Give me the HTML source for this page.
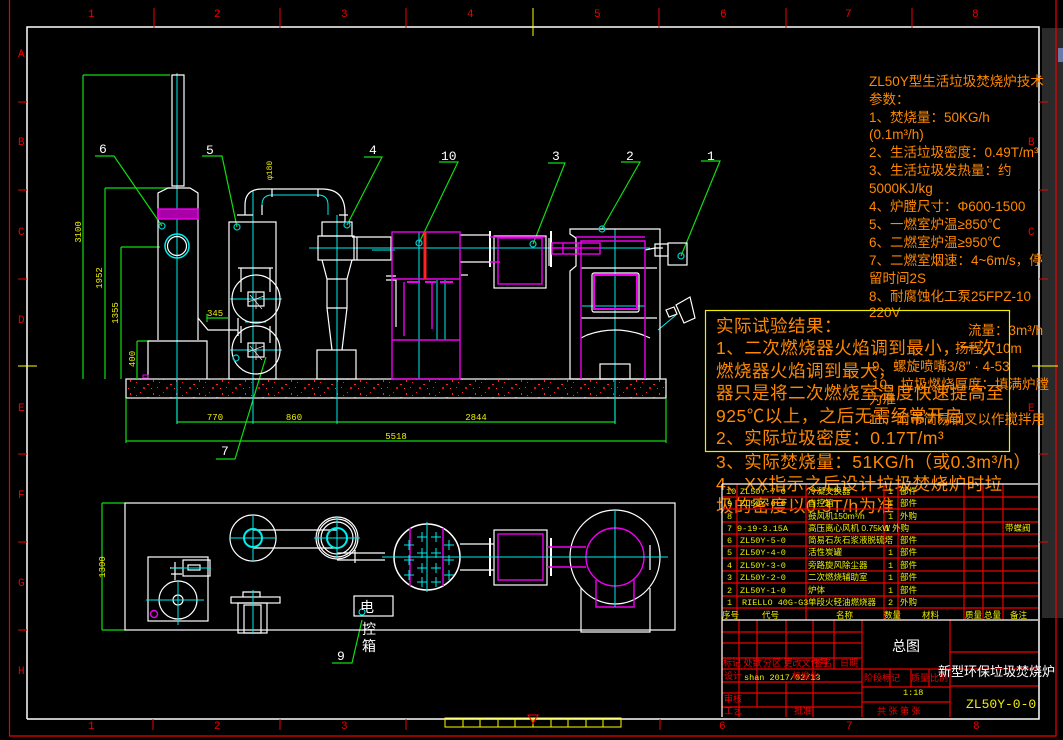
<!DOCTYPE html>
<html><head><meta charset="utf-8"><style>
html,body{margin:0;padding:0;background:#000;width:1063px;height:740px;overflow:hidden}
svg{display:block}
text{font-family:"Liberation Mono","Noto Sans CJK SC",monospace}
.cj{font-family:"Liberation Sans","Noto Sans CJK SC",sans-serif}
</style></head><body>
<svg width="1063" height="740" viewBox="0 0 1063 740" xmlns="http://www.w3.org/2000/svg">
<defs>
<pattern id="sp" width="23" height="13" patternUnits="userSpaceOnUse">
<rect x="2" y="2" width="1" height="1" fill="#f22"/><rect x="9" y="7" width="2" height="1" fill="#f22"/><rect x="15" y="3" width="1" height="2" fill="#f22"/><rect x="19" y="10" width="1" height="1" fill="#f22"/><rect x="5" y="10" width="2" height="2" fill="#d11"/><rect x="13" y="11" width="1" height="1" fill="#f33"/><rect x="21" y="5" width="1" height="1" fill="#f22"/>
</pattern>
</defs>
<rect width="1063" height="740" fill="#000"/>
<!-- grey strip -->
<rect x="1042" y="28" width="21" height="590" fill="#2a2a2a"/>
<rect x="1058" y="48" width="5" height="14" fill="#6a7aa8"/>
<!-- frame -->
<g fill="none">
<path d="M9.5 0V736H1056V0" stroke="#e00" stroke-width="1.2"/>
<path d="M27 719V27H1039V719H27" stroke="#fff" stroke-width="1.5"/>
</g>
<g stroke="#e00" stroke-width="1">
<path d="M154 8V28M280 8V28M406 8V28M659 8V28M786 8V28M912 8V28"/>
<path d="M18 102H27M18 190H27M18 279H27M18 454H27M18 542H27M18 630H27"/>
<path d="M1039 102H1048M1039 190H1048M1039 279H1048M1039 454H1048M1039 542H1048"/>
<path d="M153 719V730M280 719V730M406 719V730M660 719V730"/>
</g>
<path d="M533 8V36" stroke="#ff0"/><path d="M18 366H37" stroke="#ff0"/><path d="M1032 366H1058" stroke="#ff0"/>
<g fill="#e00" font-size="11">
<text x="88" y="17">1</text><text x="214" y="17">2</text><text x="341" y="17">3</text><text x="467" y="17">4</text><text x="594" y="17">5</text><text x="720" y="17">6</text><text x="845" y="17">7</text><text x="972" y="17">8</text>
<text x="18" y="57">A</text><text x="18" y="145">B</text><text x="18" y="235">C</text><text x="18" y="323">D</text><text x="18" y="411">E</text><text x="18" y="498">F</text><text x="18" y="586">G</text><text x="18" y="674">H</text>
<text x="1028" y="145">B</text><text x="1028" y="235">C</text><text x="1028" y="411">E</text>
<text x="88" y="729">1</text><text x="214" y="729">2</text><text x="341" y="729">3</text><text x="719" y="729">6</text><text x="846" y="729">7</text><text x="973" y="729">8</text>
</g>
<!-- ruler -->
<g fill="none" stroke="#ff0"><rect x="445" y="718" width="176" height="9"/>
<path d="M463 718v9M480 718v9M498 718v9M515 718v9M533 718v9M551 718v9M568 718v9M586 718v9M603 718v9"/></g>
<path d="M528 715h10l-5 8z" fill="none" stroke="#f00"/>

<!-- ===== ELEVATION ===== -->
<!-- slab -->
<rect x="126" y="379" width="540" height="19" fill="url(#sp)" stroke="#fff" stroke-width="1.2"/>
<!-- dimensions green -->
<g stroke="#1d1" stroke-width="1.2" fill="none">
<path d="M83 75V379M83 75H170M105 188V379M105 188H170M121 247V379M121 247H160M137 341V379M137 341H150"/>
<path d="M177 422H615M126 441H666M126 398V443M666 398V443M615 398V424M177 398V424"/>
<path d="M207 318H228M207 314V322"/>
<path d="M95 156H114L162 226M202 156H222L237 227M364 157H382L347 225M439 162H458L419 243M548 163H565L533 244M621 162H640L602 229M701 161H720L681 256M216 459H235L266 357"/>
<path d="M102 503V630M102 503H125M102 630H125M332 663H352L362 620"/>
</g>
<g fill="#ee0" font-size="9">
<text transform="translate(81,232) rotate(-90)" text-anchor="middle">3100</text>
<text transform="translate(102,278) rotate(-90)" text-anchor="middle">1952</text>
<text transform="translate(118,313) rotate(-90)" text-anchor="middle">1355</text>
<text transform="translate(135,359) rotate(-90)" text-anchor="middle">400</text>
<text transform="translate(105,567) rotate(-90)" text-anchor="middle">1300</text>
<text x="207" y="316">345</text>
<text x="215" y="420" text-anchor="middle">770</text><text x="294" y="420" text-anchor="middle">860</text><text x="476" y="420" text-anchor="middle">2844</text><text x="396" y="439" text-anchor="middle">5518</text>
<text transform="translate(272,180) rotate(-90)" font-size="8">φ180</text>
</g>
<g fill="#fff" font-size="13">
<text x="99" y="153">6</text><text x="206" y="154">5</text><text x="369" y="154">4</text><text x="441" y="160">10</text><text x="552" y="160">3</text><text x="626" y="160">2</text><text x="707" y="160">1</text><text x="221" y="455">7</text><text x="337" y="660">9</text>
</g>
<!-- cyan centerlines -->
<g stroke="#0ee" stroke-width="1" fill="none">
<path d="M177 73V424M253 190V424M337 215V424M615 229V424M309 248H650"/>
<circle cx="177" cy="246" r="12" stroke-width="1.5"/>
<path d="M230 299H282M230 350H282M245 322H266"/>
<path d="M262 215V205Q262 195 272 195H318Q328 195 328 205V215"/>
<path d="M419 232V379M437 280V340M445 280V340M372 250H395"/>
<path d="M582 306H645M658 330L676 315"/>
</g>
<!-- white equipment -->
<g stroke="#fff" stroke-width="1.2" fill="none">
<path d="M172 75V186H184V75Z"/>
<path d="M158 340V193L168 188H190L198 193V340"/>
<path d="M148 379V341H207V379"/>
<circle cx="177" cy="246" r="9.5"/>
<rect x="229" y="222" width="47" height="157"/>
<circle cx="256" cy="299" r="24"/><circle cx="256" cy="350" r="24"/>
<path d="M241 292V268M270 292V268M238 268H273M241 343V326M270 343V326"/>
<rect x="248" y="292" width="16" height="14"/><rect x="248" y="343" width="16" height="14"/>
<path d="M198 318L208 330H238V318M238 318V336"/>
<path d="M245 215V205Q245 189 262 189H322Q345 189 345 213V222M237 215H253M339 215H348"/>
<path d="M262 205V215M272 189V197M318 189V197"/>
<rect x="322" y="222" width="30" height="14"/><rect x="318" y="236" width="36" height="24"/>
<path d="M322 260L327 279H347L352 260M327 279V308H347V279M327 308L332 350M347 308L342 350"/>
<rect x="317" y="350" width="39" height="29"/>
<path d="M352 237H391V260H352M357 237V260"/>
<path d="M460 235H490V262H460"/>
<path d="M490 231V267M551 231V267" stroke-width="2"/>
<rect x="494" y="236" width="52" height="52"/>
<path d="M549 238V266"/>
<path d="M570 379V271L576 266V238L570 234V229H660V379Z"/>
<path d="M581 268H657M581 318H657M581 338L587 335Q615 325 643 335L650 338"/>
<rect x="592" y="273" width="47" height="39" rx="2"/>
<rect x="600" y="364" width="30" height="15"/>
<path d="M645 250L655 248H663M655 244V256H668V244Z"/>
<rect x="668" y="243" width="19" height="22"/>
<path d="M676 305L690 297L695 318L684 323Z"/>
<path d="M666 310l8 -3l3 7l-8 3z"/>
<path d="M386 280H396V327M386 276H396"/>
<path d="M461 275H468"/>
</g>
<g stroke="#ddd" stroke-width="0.8" fill="none">
<path d="M248 302l16 -6M250 295l12 14M256 293v16M248 352l16 -6M250 346l12 14M256 344v16"/>
</g>
<!-- magenta -->
<g stroke="#e0e" stroke-width="1.4" fill="none">
<rect x="158" y="209" width="40" height="10" fill="#a0a" />
<rect x="392" y="232" width="68" height="147"/>
<path d="M392 279H460M392 340H460M404 282V336M432 283V329"/>
<rect x="498" y="238" width="44" height="46"/>
<path d="M490 237H545M490 262H500"/>
<rect x="552" y="243" width="48" height="11"/><path d="M552 248H600M563 243V254M578 243V254"/>
<path d="M581 379V241H645V379M576 237H645"/>
<rect x="594" y="275" width="43" height="34" stroke-width="2"/>
<path d="M407 282H420M425 282H436M440 282H453" stroke-width="2"/>
</g>
<path d="M425 232V279" stroke="#f22" stroke-width="3"/>
<g stroke="#0cc" stroke-width="1.2" fill="none">
<circle cx="162" cy="226" r="3"/><circle cx="237" cy="227" r="3"/><circle cx="347" cy="225" r="3"/><circle cx="419" cy="243" r="3"/><circle cx="533" cy="244" r="3"/><circle cx="602" cy="229" r="3"/><circle cx="681" cy="256" r="3"/><circle cx="236" cy="358" r="3"/>
</g>
<rect x="143" y="375" width="5" height="3" fill="none" stroke="#e0e"/>

<!-- ===== PLAN ===== -->
<g stroke="#fff" stroke-width="1.2" fill="none">
<rect x="125" y="503" width="550" height="127"/>
<rect x="148" y="557" width="60" height="64"/>
<circle cx="178" cy="600" r="19"/><circle cx="178" cy="600" r="5"/>
<rect x="183" y="560" width="27" height="16"/><rect x="188" y="565" width="12" height="5"/>
<path d="M170 568H182M171 574H182M175 562V580"/>
<ellipse cx="253" cy="538" rx="23" ry="23"/>
<ellipse cx="337" cy="538" rx="19" ry="19"/><ellipse cx="337" cy="538" rx="16" ry="16"/><ellipse cx="337" cy="538" rx="21" ry="21"/>
<path d="M253 530H337M253 548H337M337 553H385M337 560H385M355 550V563"/>
<circle cx="427" cy="557" r="33" stroke-width="1.5"/>
<path d="M460 544H494M460 570H494M650 545V570"/>
<path d="M490 538V576M551 538V576" stroke-width="2"/>
<rect x="494" y="530" width="53" height="55"/>
<ellipse cx="615" cy="557" rx="45" ry="47"/>
<path d="M581 588V632H650V588"/>
<rect x="231" y="597" width="49" height="6"/>
<path d="M243 597V592H260V597"/>
<rect x="238" y="603" width="29" height="30"/><rect x="244" y="605" width="17" height="28"/>
<rect x="354" y="596" width="39" height="20"/>
</g>
<g stroke="#e0e" stroke-width="1.4" fill="none">
<rect x="498" y="534" width="45" height="46"/>
<ellipse cx="615" cy="557" rx="29" ry="29"/>
<path d="M596 580V607H634V580M547 547H586M547 567H586"/>
<path d="M410 528V586M443 528V586"/>
<circle cx="154" cy="614" r="3.5" stroke="#e0e"/>
</g>
<g stroke="#0ee" stroke-width="1" fill="none">
<path d="M146 600H204M178 581V625M230 538H276M253 515V561M314 538H360M337 518V558M382 557H668M427 522V592M615 510V607M171 568H211M253 590V633"/>
<circle cx="253" cy="538" r="9" stroke-width="2"/><circle cx="337" cy="538" r="10" stroke-width="2"/>
<path d="M404 545h10m-5 -5v10M404 560h10m-5 -5v10M404 575h10m-5 -5v10M417 537h10m-5 -5v10M417 553h10m-5 -5v10M417 568h10m-5 -5v10M417 582h10m-5 -5v10M431 537h10m-5 -5v10M431 553h10m-5 -5v10M431 568h10m-5 -5v10M431 582h10m-5 -5v10M444 545h10m-5 -5v10M444 560h10m-5 -5v10M444 575h10m-5 -5v10"/>
<circle cx="362" cy="612" r="3"/>
</g>
<g fill="#fff" font-size="14" class="cj"><text x="360" y="612" class="cj">电</text><text x="362" y="634" class="cj">控</text><text x="362" y="651" class="cj">箱</text></g>

<!-- ===== orange notes ===== -->
<g fill="#f80" font-size="13.5" class="cj">
<text x="869" y="86" class="cj">ZL50Y型生活垃圾焚烧炉技术</text>
<text x="869" y="104" class="cj">参数：</text>
<text x="869" y="122" class="cj">1、焚烧量：50KG/h</text>
<text x="869" y="139" class="cj">(0.1m³/h)</text>
<text x="869" y="157" class="cj">2、生活垃圾密度：0.49T/m³</text>
<text x="869" y="175" class="cj">3、生活垃圾发热量：约</text>
<text x="869" y="193" class="cj">5000KJ/kg</text>
<text x="869" y="211" class="cj">4、炉膛尺寸：Φ600-1500</text>
<text x="869" y="229" class="cj">5、一燃室炉温≥850℃</text>
<text x="869" y="247" class="cj">6、二燃室炉温≥950℃</text>
<text x="869" y="265" class="cj">7、二燃室烟速：4~6m/s，停</text>
<text x="869" y="283" class="cj">留时间2S</text>
<text x="869" y="301" class="cj">8、耐腐蚀化工泵25FPZ-10</text>
<text x="869" y="317" class="cj">220V</text>
<text x="968" y="335" class="cj">流量：3m³/h</text>
<text x="955" y="353" class="cj">扬程：10m</text>
<text x="872" y="371" class="cj">9、螺旋喷嘴3/8"  ·  4-53</text>
<text x="872" y="389" class="cj">10、垃圾燃烧厚度：填满炉膛</text>
<text x="869" y="404" class="cj">为准</text>
<text x="869" y="424" class="cj">11、附带简易钢叉以作搅拌用</text>
</g>
<rect x="705.5" y="310.5" width="304" height="141" fill="none" stroke="#ee0" stroke-width="1.2"/>
<g fill="#f80" font-size="17.5" class="cj" letter-spacing="0.5">
<text x="716" y="332" class="cj">实际试验结果：</text>
<text x="716" y="354" class="cj">1、二次燃烧器火焰调到最小，一次</text>
<text x="716" y="377" class="cj">燃烧器火焰调到最大，</text>
<text x="716" y="399" class="cj">器只是将二次燃烧室温度快速提高至</text>
<text x="716" y="422" class="cj">925℃以上，之后无需经常开启</text>
<text x="716" y="444" class="cj">2、实际垃圾密度：0.17T/m³</text>
<text x="716" y="468" class="cj">3、实际焚烧量：51KG/h（或0.3m³/h）</text>
<text x="716" y="490" class="cj">4、XX指示之后设计垃圾焚烧炉时垃</text>
<text x="716" y="512" class="cj">圾的密度以0.3T/h为准</text>
</g>

<!-- ===== table ===== -->
<g stroke="#e00" stroke-width="1.2" fill="none">
<path d="M722 497H1038M722 509H1038M722 522H1038M722 534H1038M722 546H1038M722 558H1038M722 571H1038M722 583H1038M722 596H1038M722 608H1038"/>
<path d="M737 484V620M806 484V620M884 484V620M898 484V620M964 484V620M983 484V620M1003 484V620"/>
<path d="M722 620V717M739 620V717M757 620V669M786 620V669M813 620V717M834 620V669M862 620V717M950 620V717"/>
<path d="M722 632H862M722 643H862M722 658H862M722 669H1038M722 682H862M722 693H862M722 707H862"/>
<path d="M862 687H950M862 702H950M950 652H1038M950 686H1038M890 669V687M911 669V687M929 669V687"/>
<path d="M757 669V707M786 682V717"/>
</g>
<path d="M722 484H1038M722 620H1038M722 484V717" stroke="#fff" stroke-width="1.2" fill="none"/>
<g fill="#ee0" font-size="8.5" class="cj">
<text x="726" y="494">10</text><text x="740" y="494">ZL50Y-7-0</text><text x="808" y="494" class="cj">冷凝交换器</text><text x="888" y="494">1</text><text x="900" y="494" class="cj">部件</text>
<text x="727" y="506">9</text><text x="740" y="506">ZL50Y-6-0</text><text x="808" y="506" class="cj">自控箱</text><text x="888" y="506">1</text><text x="900" y="506" class="cj">部件</text>
<text x="727" y="519">8</text><text x="808" y="519" class="cj">鼓风机150m³/h</text><text x="888" y="519">1</text><text x="900" y="519" class="cj">外购</text>
<text x="727" y="531">7</text><text x="737" y="531">9-19-3.15A</text><text x="808" y="531" class="cj">高压离心风机 0.75kW</text><text x="885" y="531" class="cj">1 外购</text><text x="1005" y="531" class="cj">带蝶阀</text>
<text x="727" y="543">6</text><text x="740" y="543">ZL50Y-5-0</text><text x="808" y="543" class="cj">简易石灰石浆液脱硫塔</text><text x="900" y="543" class="cj">部件</text>
<text x="727" y="555">5</text><text x="740" y="555">ZL50Y-4-0</text><text x="808" y="555" class="cj">活性炭罐</text><text x="888" y="555">1</text><text x="900" y="555" class="cj">部件</text>
<text x="727" y="568">4</text><text x="740" y="568">ZL50Y-3-0</text><text x="808" y="568" class="cj">旁路旋风除尘器</text><text x="888" y="568">1</text><text x="900" y="568" class="cj">部件</text>
<text x="727" y="580">3</text><text x="740" y="580">ZL50Y-2-0</text><text x="808" y="580" class="cj">二次燃烧辅助室</text><text x="888" y="580">1</text><text x="900" y="580" class="cj">部件</text>
<text x="727" y="593">2</text><text x="740" y="593">ZL50Y-1-0</text><text x="808" y="593" class="cj">炉体</text><text x="888" y="593">1</text><text x="900" y="593" class="cj">部件</text>
<text x="727" y="605">1</text><text x="742" y="605">RIELLO 40G-G3</text><text x="808" y="605" class="cj">单段火轻油燃烧器</text><text x="888" y="605">2</text><text x="900" y="605" class="cj">外购</text>
<text x="722" y="618" class="cj">序号</text><text x="762" y="618" class="cj">代号</text><text x="836" y="618" class="cj">名称</text><text x="884" y="618" class="cj">数量</text><text x="922" y="618" class="cj">材料</text><text x="965" y="618" class="cj">质量</text><text x="984" y="618" class="cj">总量</text><text x="1010" y="618" class="cj">备注</text>
<text x="744" y="680">shan 2017/02/13</text>
<text x="903" y="695">1:18</text>
</g>
<g fill="#e00" font-size="9" class="cj">
<text x="723" y="666" class="cj">标记 处数</text><text x="763" y="666" class="cj">分区 更改文件号</text><text x="814" y="666" class="cj">签名</text><text x="840" y="666" class="cj">日期</text>
<text x="724" y="679" class="cj">设计</text><text x="792" y="679" class="cj">标准化</text>
<text x="864" y="681" class="cj">阶段标记</text><text x="911" y="681" class="cj">质量</text><text x="930" y="681" class="cj">比例</text>
<text x="724" y="702" class="cj">审核</text><text x="724" y="714" class="cj">工艺</text><text x="794" y="714" class="cj">批准</text>
<text x="877" y="714" class="cj">共  张 第  张</text>
</g>
<text x="906" y="651" fill="#fff" font-size="14" class="cj" text-anchor="middle">总图</text>
<text x="938" y="676" fill="#fff" font-size="13" class="cj">新型环保垃圾焚烧炉</text>
<text x="966" y="708" fill="#ee0" font-size="13">ZL50Y-0-0</text>
</svg>
</body></html>
